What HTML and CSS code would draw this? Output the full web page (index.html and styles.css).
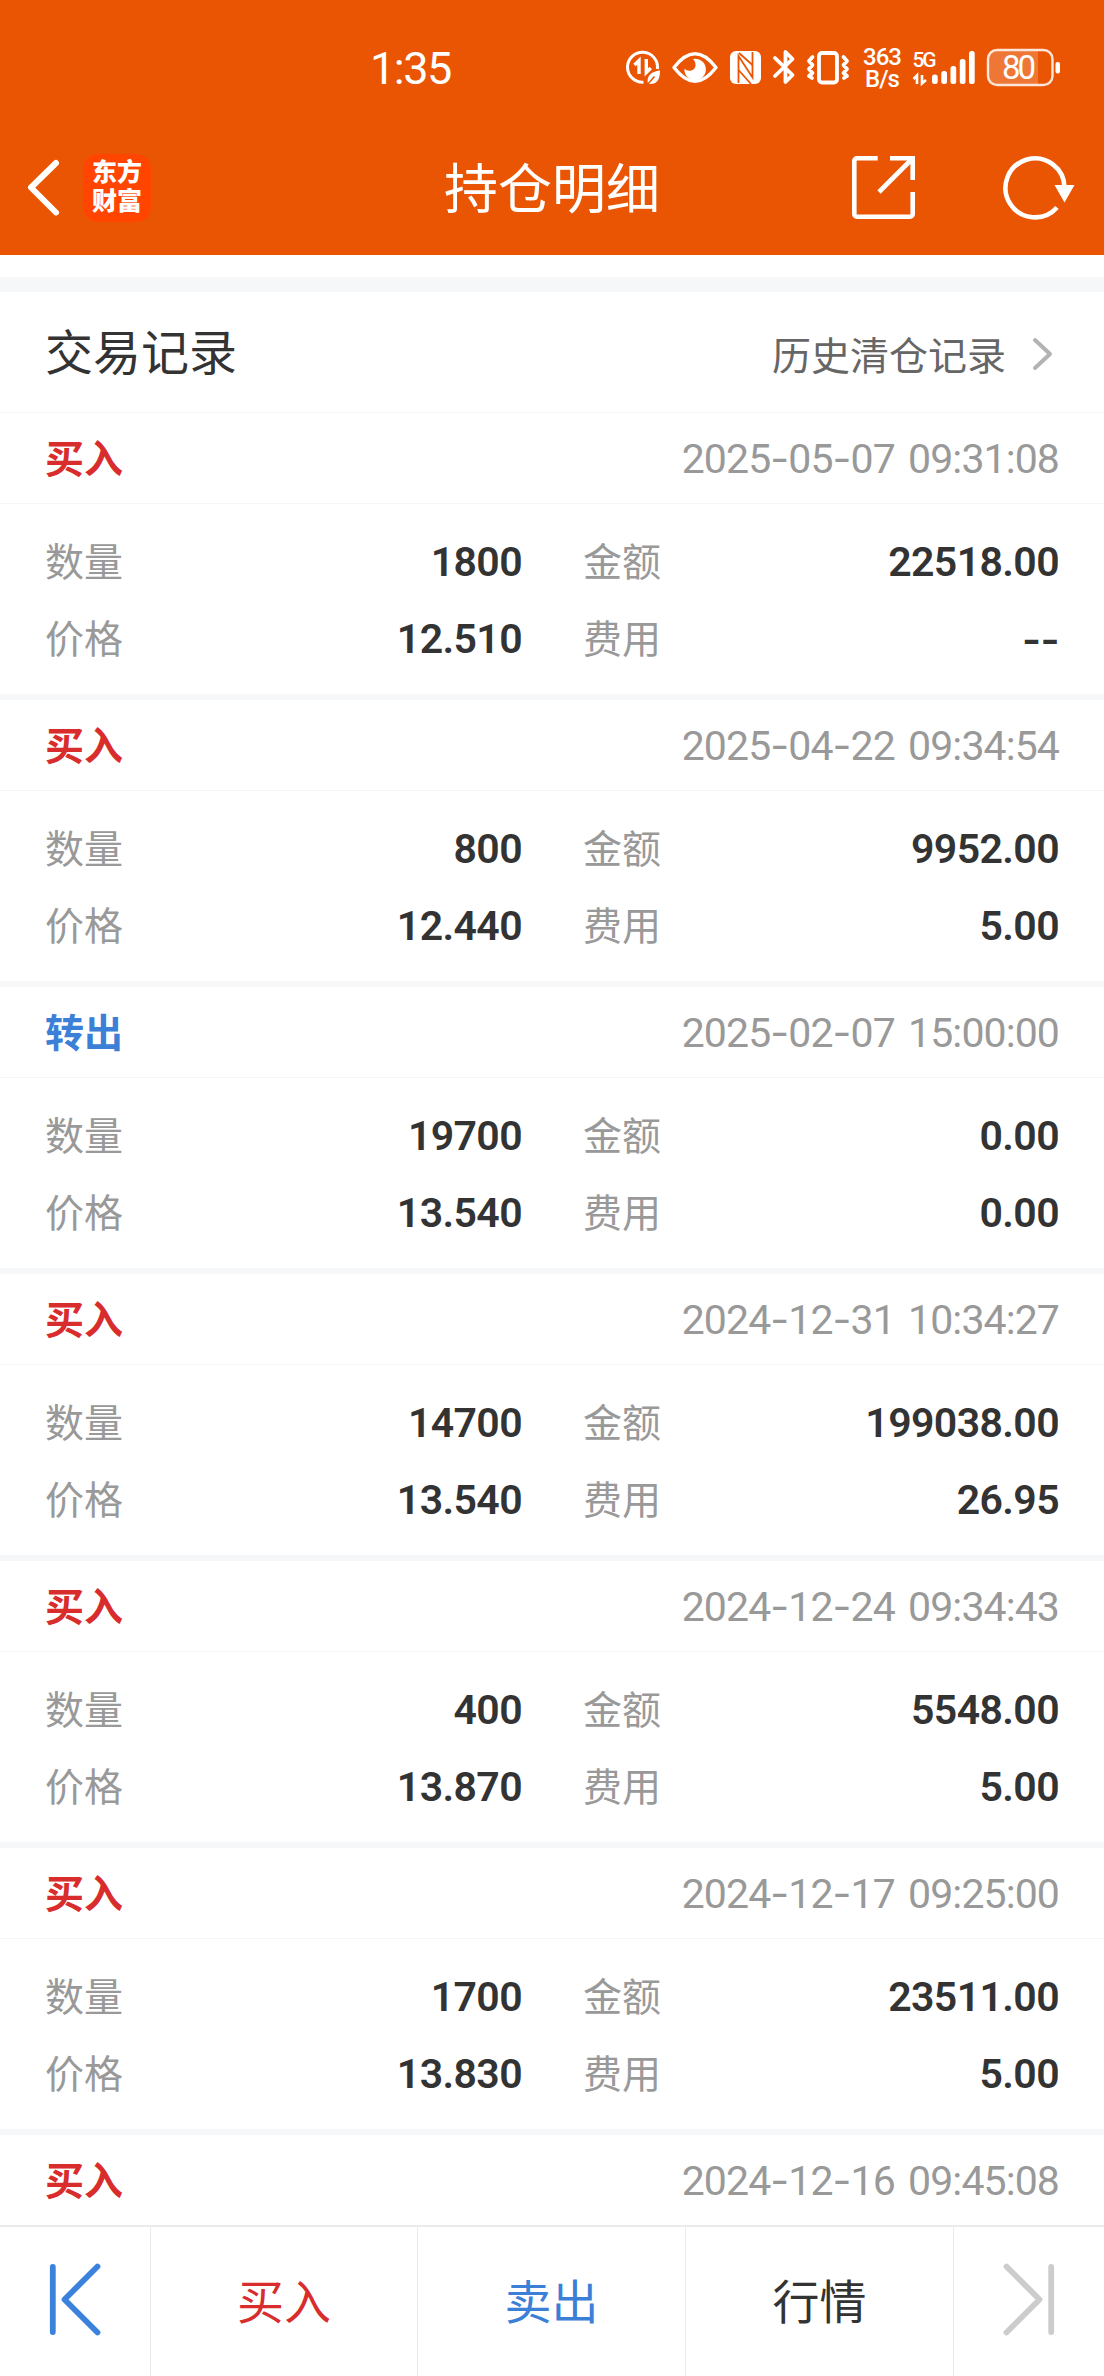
FILE: index.html
```html
<!DOCTYPE html>
<html lang="zh-CN">
<head>
  <meta charset="UTF-8">
  <meta name="viewport" content="width=device-width, initial-scale=1.0">
  <title>持仓明细</title>
  <link rel="stylesheet" href="styles.css">
</head>
<body>

  <div class="page">
    <!-- Header -->
    <header class="header">
      <div class="status-bar">
        <div class="status-time">1:35</div>
        <div class="status-icons">
          <!-- Data saver -->
          <svg width="44" height="56" viewBox="624 40 44 56" fill="none" stroke="#fff" stroke-width="3">
            <path d="M643.5 82.200A15 15 0 1 1 657.400 69"/>
            <path d="M634.500 65l4.500-4.500V74" stroke-width="3.400"/>
            <path d="M646.300 59v13.500l4.500-4.500" stroke-width="3.400"/>
            <path d="M648 84c-2-8 3-12.500 12-13.500 0 9-3 14.500-12 13.500z" fill="#fff" stroke="none"/>
            <path d="M647.500 84.500l7-8" stroke="#ea5504" stroke-width="1.500"/>
          </svg>
          <!-- Eye -->
          <svg width="56" height="56" viewBox="668 40 56 56" fill="none" stroke="#fff" stroke-width="3.4">
            <path d="M674 67.500C682 57 688 53.700 695 53.700S708 57 716 67.500C708 78 702 81.300 695 81.300S682 78 674 67.500z" stroke-linejoin="round"/>
            <path d="M693 59a10.700 10.700 0 1 1-8.500 9.500c3 4 10.500 2.500 11-3 .2-3-1-5-2.500-6.500z" fill="#fff" stroke="none"/>
          </svg>
          <!-- NFC -->
          <svg width="42" height="56" viewBox="724 40 42 56">
            <rect x="730" y="51" width="31" height="33" rx="6" fill="#fff"/>
            <path d="M738.500 83V56l14 21.500V52" fill="none" stroke="#ea5504" stroke-width="1.800"/>
            <path d="M739 53l13.500 12M738.500 70l12.500 14" fill="none" stroke="#ea5504" stroke-width="1.800"/>
          </svg>
          <!-- Bluetooth -->
          <svg width="36" height="56" viewBox="766 40 36 56" fill="none" stroke="#fff" stroke-width="3.8" stroke-linejoin="round" stroke-linecap="round">
            <path d="M775 58l17.500 17-7 7V52l7 7-17.500 17"/>
          </svg>
          <!-- Vibrate -->
          <svg width="54" height="56" viewBox="802 40 54 56" fill="none" stroke="#fff" stroke-width="3.8" stroke-linejoin="round" stroke-linecap="round">
            <rect x="819" y="53" width="18" height="29.500" rx="3"/>
            <path d="M812.500 57l-3.500 4 3.500 4-3.500 4 3.500 4-3.500 3 3 2M843.500 57l3.500 4-3.500 4 3.500 4-3.500 4 3.500 3-3 2"/>
          </svg>
          <div class="net-speed"><span>363</span><span>B/s</span></div>
          <!-- Signal -->
          <svg width="74" height="56" viewBox="908 40 74 56" fill="#fff">
            <text class="signal-type" x="912.500" y="67" textLength="24">5G</text>
            <path d="M913.500 79l3.500-3.500V84M922 75v8.500l4-3.500" fill="none" stroke="#fff" stroke-width="2.600"/>
            <rect x="932" y="74.500" width="5.700" height="9.500" rx="2.500"/>
            <rect x="941.300" y="71" width="5.700" height="13" rx="2.500"/>
            <rect x="950.500" y="66" width="5.700" height="18" rx="2.500"/>
            <rect x="959.800" y="59" width="5.700" height="25" rx="2.500"/>
            <rect x="969" y="51" width="5.700" height="33" rx="2.500"/>
          </svg>
          <!-- Battery -->
          <svg width="122" height="56" viewBox="982 40 122 56" fill="#fff">
            <path d="M996 51h42v33h-42a8 8 0 0 1-8-8V59a8 8 0 0 1 8-8z" opacity=".2"/>
            <rect x="988" y="50" width="64.500" height="35" rx="9" fill="none" stroke="#fff" stroke-width="2.400" opacity=".85"/>
            <rect x="1055.500" y="62" width="4.500" height="11.500" rx="2"/>
            <text class="battery-level" x="1002" y="79" textLength="34">80</text>
          </svg>
        </div>
      </div>

      <div class="nav-bar">
        <div class="nav-left">
          <svg width="40" height="64" viewBox="23 156 40 64" fill="none" stroke="#fff" stroke-width="6" stroke-linecap="round" stroke-linejoin="round">
            <path d="M56 163L31 187.500 56 212.500"/>
          </svg>
          <div class="app-logo"><span>东方</span><span>财富</span></div>
        </div>
        <h1 class="nav-title">持仓明细</h1>
        <div class="nav-right">
          <!-- Share -->
          <svg width="64" height="64" viewBox="852 156 64 64" fill="none" stroke="#fff" stroke-width="4.6">
            <path d="M877.700 158.300H857a2.700 2.700 0 0 0-2.700 2.700v53a2.700 2.700 0 0 0 2.700 2.700h53a2.700 2.700 0 0 0 2.700-2.700v-22"/>
            <path d="M890 158.300h22.700V180M912 159l-33 33"/>
          </svg>
          <!-- Refresh -->
          <svg width="74" height="66" viewBox="1002 154 74 66" fill="none" stroke="#fff" stroke-width="4.6">
            <path d="M1057 206.500A29.500 29.500 0 1 1 1064.500 187"/>
            <path d="M1054.500 184h20l-10 17.500z" fill="#fff" stroke="none"/>
          </svg>
        </div>
      </div>
    </header>

    <!-- Trade records -->
    <main class="content">
      <div class="section-header">
        <h2 class="section-title">交易记录</h2>
        <a class="history-link" href="#">
          <span class="history-text">历史清仓记录</span>
          <svg width="22" height="36" viewBox="0 0 22 36" fill="none" stroke="#b3b3b3" stroke-width="4" stroke-linecap="round" stroke-linejoin="round">
            <path d="M3 4l15 14L3 32"/>
          </svg>
        </a>
      </div>
      <div id="record-list"></div>
    </main>

    <!-- Bottom bar -->
    <footer class="bottom-bar">
      <div class="bar-item arrow">
        <svg width="54" height="74" viewBox="48 2262 54 74" fill="none" stroke="#3b82dc" stroke-width="5.800" stroke-linecap="round" stroke-linejoin="round">
          <path d="M52.800 2267v65M97.500 2266.500L64.500 2299.500 97.500 2332.500"/>
        </svg>
      </div>
      <div class="bar-item buy">买入</div>
      <div class="bar-item sell">卖出</div>
      <div class="bar-item">行情</div>
      <div class="bar-item arrow">
        <svg width="54" height="74" viewBox="1002 2262 54 74" fill="none" stroke="#ccc" stroke-width="5.800" stroke-linecap="round" stroke-linejoin="round">
          <path d="M1051.200 2267v65M1006.500 2266.500L1039.500 2299.500 1006.500 2332.500"/>
        </svg>
      </div>
    </footer>
  </div>

  <script>
    const records = [
      { type: '买入', time: '2025-05-07 09:31:08', qty: '1800', amount: '22518.00', price: '12.510', fee: '--' },
      { type: '买入', time: '2025-04-22 09:34:54', qty: '800', amount: '9952.00', price: '12.440', fee: '5.00' },
      { type: '转出', time: '2025-02-07 15:00:00', qty: '19700', amount: '0.00', price: '13.540', fee: '0.00' },
      { type: '买入', time: '2024-12-31 10:34:27', qty: '14700', amount: '199038.00', price: '13.540', fee: '26.95' },
      { type: '买入', time: '2024-12-24 09:34:43', qty: '400', amount: '5548.00', price: '13.870', fee: '5.00' },
      { type: '买入', time: '2024-12-17 09:25:00', qty: '1700', amount: '23511.00', price: '13.830', fee: '5.00' },
      { type: '买入', time: '2024-12-16 09:45:08' }
    ];

    // Hyphens use a wider glyph than the digits' font has
    function widen(text) {
      return text.replace(/-/g, '<span class="dash">-</span>');
    }

    function cell(label, value) {
      return `<div class="cell"><span class="label">${label}</span><span class="value">${widen(value)}</span></div>`;
    }

    document.getElementById('record-list').innerHTML = records.map(r => `
      <div class="record">
        <div class="record-head">
          <span class="record-type ${r.type === '买入' ? 'buy' : 'sell'}">${r.type}</span>
          <span class="record-time">${widen(r.time)}</span>
        </div>
        ${r.qty ? `<div class="record-body">
          ${cell('数量', r.qty)}${cell('金额', r.amount)}
          ${cell('价格', r.price)}${cell('费用', r.fee)}
        </div>` : ''}
      </div>
    `).join('');
  </script>

</body>
</html>
```
FILE: styles.css
```css
/* General Reset */
* {
  margin: 0;
  padding: 0;
  box-sizing: border-box;
}

body {
  background: #fff;
  color: #333;
  font-family: Roboto, 'Noto Sans CJK SC', sans-serif;
}

svg {
  display: block;
  flex-shrink: 0;
}

.page {
  display: flex;
  flex-direction: column;
  width: 1104px;
  height: 2376px;
  overflow: hidden;
}

/* Header */
.header {
  height: 255px;
  flex-shrink: 0;
  background: #ea5504;
  color: #fff;
}

.status-bar {
  display: flex;
  justify-content: space-between;
  height: 120px;
  padding: 40px 0 0 370px;
}

.status-time {
  font-size: 45px;
  line-height: 58px;
  letter-spacing: -1.5px;
}

.status-icons {
  display: flex;
}

.net-speed {
  display: flex;
  flex-direction: column;
  width: 52px;
  padding-top: 6px;
  font-size: 24px;
  font-weight: 500;
  line-height: 22px;
  letter-spacing: -1px;
  text-align: center;
}

.signal-type {
  font-size: 21px;
  font-weight: 500;
}

.battery-level {
  font-size: 33px;
}

.nav-bar {
  display: grid;
  grid-template-columns: 1fr auto 1fr;
  align-items: center;
  height: 135px;
  padding: 0 28px 0 23px;
}

.nav-left {
  display: flex;
  align-items: center;
  gap: 20px;
}

.app-logo {
  display: flex;
  flex-direction: column;
  align-items: center;
  justify-content: center;
  width: 68px;
  height: 68px;
  padding-bottom: 2px;
  border-radius: 15px;
  background: #ff4500;
  font-size: 25px;
  font-weight: 900;
  line-height: 29px;
}

.nav-title {
  padding: 6px 0 0 5px;
  font-size: 54px;
  font-weight: 400;
  line-height: 70px;
}

.nav-right {
  display: flex;
  align-items: center;
  justify-content: flex-end;
  gap: 86px;
}

/* Section title */
.content {
  flex: 1;
  min-height: 0;
  padding-top: 22px;
  overflow: hidden;
}

.section-header {
  display: flex;
  align-items: center;
  justify-content: space-between;
  height: 136px;
  padding: 0 50px 0 45px;
  border-top: 15px solid #f6f7f9;
  border-bottom: 1px solid #f5f5f5;
}

.section-title {
  padding-bottom: 6px;
  font-size: 48px;
  font-weight: 400;
}

.history-link {
  display: flex;
  align-items: center;
  gap: 26px;
  padding-top: 4px;
  color: #666;
  font-size: 39px;
  text-decoration: none;
}

.history-text {
  padding-bottom: 3px;
}

/* Records */
.record {
  border-bottom: 6px solid #f6f7f9;
}

.record-head {
  display: flex;
  align-items: center;
  justify-content: space-between;
  height: 91px;
  padding: 0 45px;
  border-bottom: 1px solid #f5f5f5;
}

.record-type {
  padding-bottom: 4px;
  font-size: 39px;
  font-weight: 700;
}

.buy {
  color: #d92c2c;
}

.sell {
  color: #3b80d6;
}

.record-time {
  color: #999;
  font-size: 41px;
  letter-spacing: -0.9px;
  word-spacing: 4px;
}

.record-body {
  display: grid;
  grid-template-columns: 477px 476px;
  column-gap: 61px;
  grid-auto-rows: 77px;
  height: 190px;
  padding: 18px 45px 0;
}

.cell {
  display: flex;
  align-items: center;
  justify-content: space-between;
}

.label {
  padding-bottom: 4px;
  color: #999;
  font-size: 39px;
}

.value {
  padding-top: 2px;
  font-size: 41px;
  font-weight: 600;
  letter-spacing: -0.6px;
}

.dash {
  font-family: Inter, sans-serif;
}

/* Bottom bar */
.bottom-bar {
  display: grid;
  grid-template-columns: 150px 267px 268px 268px 151px;
  flex-shrink: 0;
  height: 151px;
  border-top: 2px solid #ebebeb;
}

.bar-item {
  display: flex;
  align-items: center;
  justify-content: center;
  padding-bottom: 6px;
  font-size: 47px;
}

.bar-item + .bar-item {
  border-left: 1px solid #ebebeb;
}

.bar-item.arrow {
  align-items: flex-start;
  padding-top: 35px;
}
```
